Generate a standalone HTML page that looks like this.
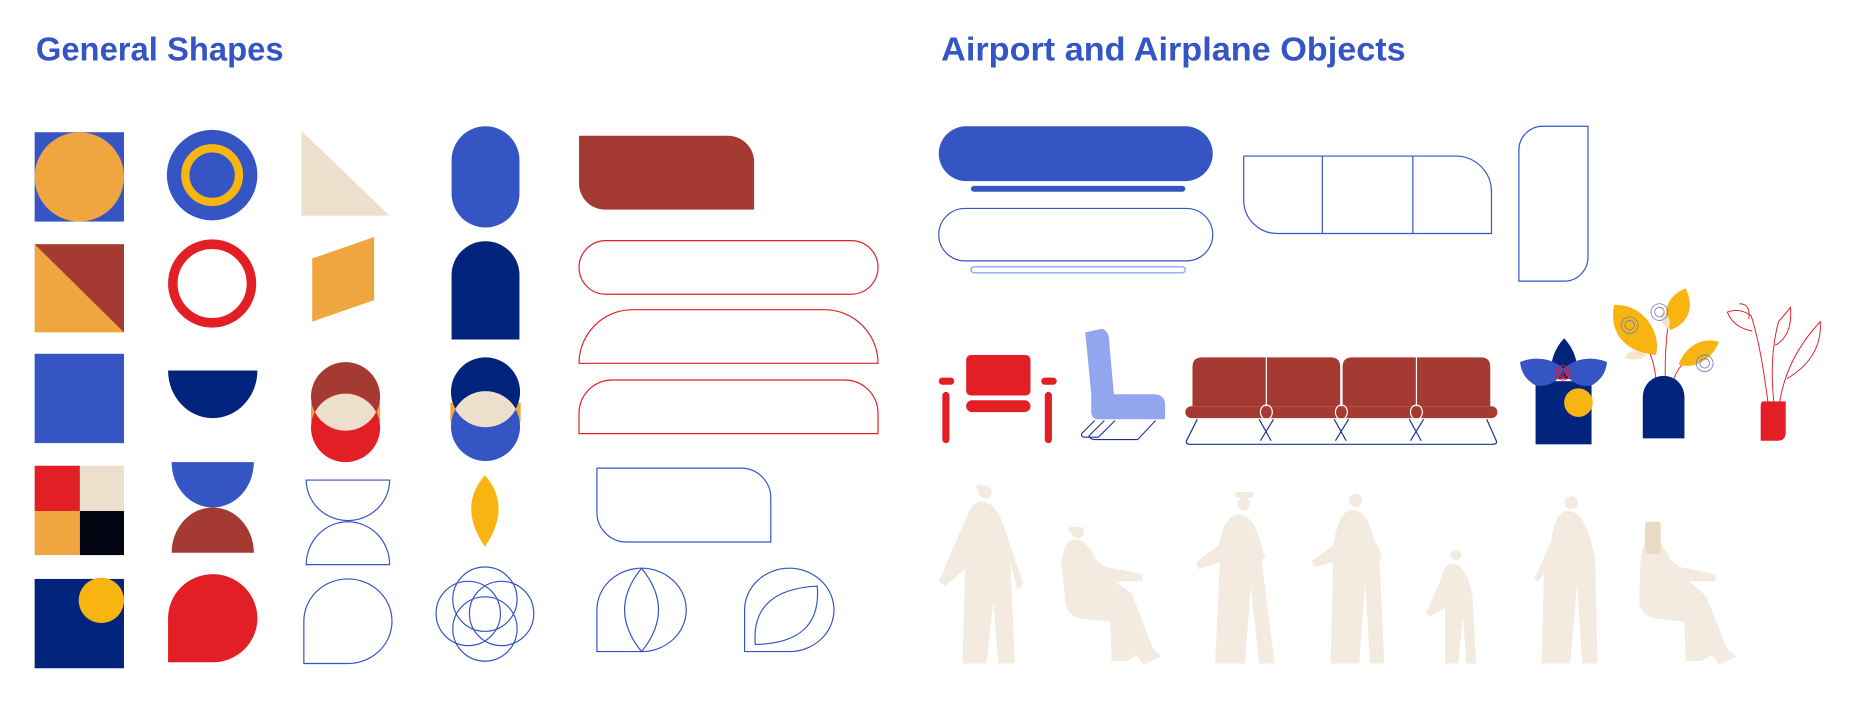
<!DOCTYPE html>
<html><head><meta charset="utf-8"><style>
html,body{margin:0;padding:0;background:#fff;width:1868px;height:704px;overflow:hidden}
svg{display:block}
text{font-family:"Liberation Sans",sans-serif;font-weight:bold;fill:#3555c5}
</style></head><body>
<svg width="1868" height="704" viewBox="0 0 1568 591" xmlns="http://www.w3.org/2000/svg">
<text x="30" y="51" font-size="28" textLength="208" lengthAdjust="spacingAndGlyphs">General Shapes</text>
<text x="790" y="51" font-size="28" textLength="390" lengthAdjust="spacingAndGlyphs">Airport and Airplane Objects</text>

<!-- column 1 -->
<rect x="29" y="111" width="75" height="75" fill="#3555c5"/>
<ellipse cx="66.5" cy="148.5" rx="37.5" ry="37.5" fill="#efa540"/>
<rect x="29" y="205" width="75" height="74" fill="#efa540"/>
<polygon points="29,205 104,205 104,279" fill="#a53a32"/>
<rect x="29" y="297" width="75" height="75" fill="#3555c5"/>
<rect x="29" y="391" width="38" height="38" fill="#e31f26"/>
<rect x="67" y="391" width="37" height="38" fill="#ecdfcc"/>
<rect x="29" y="429" width="38" height="37" fill="#efa540"/>
<rect x="67" y="429" width="37" height="37" fill="#020412"/>
<rect x="29" y="486" width="75" height="75" fill="#02247c"/>
<ellipse cx="85" cy="504" rx="19" ry="19" fill="#f8b512"/>

<!-- column 2 -->
<circle cx="178" cy="147" r="38" fill="#3555c5"/>
<circle cx="178" cy="147" r="22.5" fill="none" stroke="#f8b512" stroke-width="7"/>
<circle cx="178" cy="238" r="33" fill="none" stroke="#e31f26" stroke-width="8"/>
<path d="M141,311 H216 A37.5,40 0 0 1 141,311Z" fill="#02247c"/>
<path d="M144,388 H213 A34.5,38 0 0 1 144,388Z" fill="#3555c5"/>
<path d="M144,464 H213 V464 A34.5,38 0 0 0 144,464Z" fill="#a53a32"/>
<path d="M141,556 V519 A37.5,37 0 1 1 178,556 Z" fill="#e31f26"/>

<!-- column 3 -->
<polygon points="253,110 253,181 327,181" fill="#ecdfcc"/>
<polygon points="262,217 314,199 314,252 262,270" fill="#efa540"/>
<rect x="261" y="338" width="58" height="16" fill="#efa540"/>
<circle cx="290" cy="333" r="29" fill="#a53a32"/>
<circle cx="290" cy="359" r="29" fill="#e31f26"/>
<path d="M264.3,346 A29,29 0 0 1 315.7,346 A29,29 0 0 1 264.3,346Z" fill="#ecdfcc"/>
<path d="M257,403 H327 A35,34 0 0 1 257,403Z" fill="none" stroke="#3555c5" stroke-width="1"/>
<path d="M257,474 H327 A35,36 0 0 0 257,474Z" fill="none" stroke="#3555c5" stroke-width="1"/>
<path d="M255,557 V521 A37,35.5 0 1 1 292,557 Z" fill="none" stroke="#3555c5" stroke-width="1"/>

<!-- column 4 -->
<rect x="379" y="106" width="57" height="85" rx="28.5" fill="#3555c5"/>
<path d="M379,285 V231 A28.5,28.5 0 0 1 436,231 V285Z" fill="#02247c"/>
<rect x="378" y="338" width="59" height="16" fill="#efa540"/>
<circle cx="407.5" cy="329" r="29" fill="#02247c"/>
<circle cx="407.5" cy="358" r="29" fill="#3555c5"/>
<path d="M382,343.5 A29,29 0 0 1 433,343.5 A29,29 0 0 1 382,343.5Z" fill="#ecdfcc"/>
<path d="M407,399 Q430,425 407,459 Q384,425 407,399Z" fill="#f8b512"/>
<g fill="none" stroke="#3555c5" stroke-width="1">
<circle cx="407" cy="503" r="27"/><circle cx="407" cy="528" r="27"/>
<circle cx="393" cy="515" r="27"/><circle cx="421" cy="515" r="27"/>
</g>

<!-- column 5 -->
<path d="M486,114 H611 A22,22 0 0 1 633,136 V176 H508 A22,22 0 0 1 486,154Z" fill="#a53a32"/>
<rect x="486" y="202" width="251" height="45" rx="22.5" fill="none" stroke="#e31f26" stroke-width="1"/>
<path d="M486,305 A45,45 0 0 1 531,260 H692 A45,45 0 0 1 737,305Z" fill="none" stroke="#e31f26" stroke-width="1"/>
<path d="M486,364 V347 A28,28 0 0 1 514,319 H709 A28,28 0 0 1 737,347 V364Z" fill="none" stroke="#e31f26" stroke-width="1"/>
<path d="M501,393 H622 A25,25 0 0 1 647,418 V455 H526 A25,25 0 0 1 501,430Z" fill="none" stroke="#3555c5" stroke-width="1"/>
<g fill="none" stroke="#3555c5" stroke-width="1">
<path d="M501,547 V512 A37.5,35 0 1 1 538.5,547 Z"/>
<path d="M538.5,477 Q510,512 538.5,547 Q567,512 538.5,477Z"/>
<path d="M625,547 V512 A37.5,35 0 1 1 662.5,547 Z"/>
<path d="M634,541 Q630,495 686,492 Q690,540 634,541Z"/>
</g>

<!-- airport row 1 -->
<rect x="788" y="106" width="230" height="46" rx="23" fill="#3555c5"/>
<rect x="815" y="156" width="180" height="5" rx="2.5" fill="#3555c5"/>
<rect x="788" y="175" width="230" height="44" rx="22" fill="none" stroke="#3555c5" stroke-width="1"/>
<rect x="815" y="224" width="180" height="5" rx="2.5" fill="none" stroke="#91a6ee" stroke-width="1.2"/>
<path d="M1044,131 H1222 A30,30 0 0 1 1252,161 V196 H1072 A28,28 0 0 1 1044,168Z" fill="none" stroke="#3555c5" stroke-width="1"/>
<line x1="1110" y1="131" x2="1110" y2="196" stroke="#3555c5" stroke-width="1"/>
<line x1="1186" y1="131" x2="1186" y2="196" stroke="#3555c5" stroke-width="1"/>
<path d="M1295,106 H1333 V216 A20,20 0 0 1 1313,236 H1275 V126 A20,20 0 0 1 1295,106Z" fill="none" stroke="#3555c5" stroke-width="1"/>

<!-- red chair -->
<g fill="#e31f26">
<rect x="788" y="317" width="13" height="6" rx="3"/>
<rect x="791" y="329" width="6" height="43" rx="3"/>
<rect x="874" y="317" width="13" height="6" rx="3"/>
<rect x="877" y="329" width="6" height="43" rx="3"/>
<rect x="811" y="298" width="54" height="34" rx="4"/>
<rect x="811" y="336" width="54" height="10" rx="5"/>
</g>
<!-- plane seat -->
<path d="M911,279 L925,276 Q931,278 931,286 L935,331 H968 Q978,331 978,340 V352 H922 Q916,352 916,345 V331 Z" fill="#91a6ee"/>
<g fill="none" stroke="#1b338f" stroke-width="0.9">
<path d="M919,353 L908,364 Q907,367 911,367 L922,367 L936,353"/>
<path d="M927,353 L914,366 Q915,369 919,369 L955,369 L970,353"/>
</g>
<!-- bench -->
<g fill="#a53a32">
<path d="M1001,341 V308 Q1001,300 1009,300 H1117 Q1125,300 1125,308 V341Z"/>
<path d="M1127,341 V308 Q1127,300 1135,300 H1243 Q1251,300 1251,308 V341Z"/>
<rect x="995" y="341" width="262" height="10" rx="5"/>
</g>
<g stroke="#fff" stroke-width="1" fill="none">
<line x1="1063" y1="300" x2="1063" y2="341"/><line x1="1189" y1="300" x2="1189" y2="341"/>
<line x1="1126" y1="300" x2="1126" y2="341"/>
<ellipse cx="1063" cy="346" rx="5" ry="6"/><ellipse cx="1126" cy="346" rx="5" ry="6"/><ellipse cx="1189" cy="346" rx="5" ry="6"/>
</g>
<g fill="none" stroke="#1b338f" stroke-width="1">
<path d="M1005,352 L996,370 Q995,373 999,373 H1253 Q1257,373 1256,370 L1248,352"/>
<path d="M1057,352 L1067,370 M1069,352 L1058,370 M1120,352 L1130,370 M1132,352 L1121,370 M1183,352 L1193,370 M1195,352 L1184,370"/>
</g>
<!-- pedestal plant -->
<rect x="1289" y="320" width="47" height="53" fill="#02247c"/>
<path d="M1313,284 Q1326,298 1324,318 H1302 Q1300,298 1313,284Z" fill="#02247c"/>
<path d="M1276,304 C1290,298 1305,302 1313,310 C1308,322 1296,326 1288,323 C1280,318 1277,312 1276,304Z" fill="#3555c5"/>
<path d="M1349,304 C1335,298 1320,302 1312,310 C1317,322 1329,326 1337,323 C1345,318 1348,312 1349,304Z" fill="#3555c5"/>
<circle cx="1325" cy="338" r="12" fill="#f8b512"/>
<g fill="none" stroke="#e31f26" stroke-width="0.8"><circle cx="1312" cy="313" r="6"/><circle cx="1312" cy="313" r="3.5"/><circle cx="1309" cy="315" r="3"/><circle cx="1315" cy="315" r="3"/></g>
<!-- vase plant -->
<g fill="none" stroke="#e31f26" stroke-width="0.8">
<path d="M1373,275 Q1388,295 1390,318"/><path d="M1398,320 Q1397,290 1402,262"/><path d="M1405,318 Q1412,300 1428,297"/>
</g>
<path d="M1355,256 C1380,255 1395,280 1390,298 C1365,296 1350,280 1355,256Z" fill="#f8b512"/>
<path d="M1415,242 C1423,258 1417,272 1402,277 C1394,262 1400,248 1415,242Z" fill="#f8b512"/>
<path d="M1443,287 C1436,304 1420,310 1409,306 C1414,292 1428,282 1443,287Z" fill="#f8b512"/>
<path d="M1382,298 C1375,293 1366,294 1364,300 C1370,303 1378,302 1382,298Z" fill="#f3e4d0"/>
<path d="M1400,276 C1394,272 1392,265 1396,262 C1402,266 1403,272 1400,276Z" fill="#f3e4d0"/>
<g fill="none" stroke="#6a7cc8" stroke-width="0.7">
<circle cx="1368" cy="273" r="7"/><circle cx="1368" cy="273" r="4"/>
<circle cx="1393" cy="262" r="7"/><circle cx="1393" cy="262" r="4"/>
<circle cx="1431" cy="305" r="7"/><circle cx="1431" cy="305" r="4"/>
</g>
<path d="M1379,368 V333 A17.5,17.5 0 0 1 1414,333 V368Z" fill="#02247c"/>
<!-- red vase -->
<g fill="none" stroke="#e31f26" stroke-width="0.8">
<path d="M1484,337 Q1478,290 1470,265 Q1460,258 1450,262 Q1455,275 1471,278"/>
<path d="M1468,268 Q1470,255 1460,255"/>
<path d="M1489,337 Q1485,300 1493,270 Q1500,262 1503,258 Q1505,282 1490,290"/>
<path d="M1494,337 Q1500,300 1528,270 Q1530,300 1500,318"/>
</g>
<path d="M1480,337 H1499 V363 Q1499,370 1492,370 H1478 V341 Q1478,337 1480,337Z" fill="#e31f26"/>

<!-- people -->
<g fill="#f3ebe0">
<circle cx="827" cy="413" r="5.5"/><circle cx="822" cy="409" r="2.5"/>
<path d="M822,421 Q835,420 842,440 L859,490 L854,495 L848,472 L852,557 L838,557 L834,505 L828,557 L808,557 L810,478 L793,492 L788,488 L808,442 Q815,422 822,421Z"/>
<circle cx="905" cy="447" r="5"/><circle cx="900" cy="445" r="3"/>
<path d="M902,453 Q912,452 920,470 L928,476 L959,482 L959,488 L936,488 L950,498 L968,545 L975,551 L960,558 L954,550 L946,555 L933,555 L932,522 L906,519 Q894,516 894,502 L891,473 Q893,453 902,453Z"/>
<circle cx="1044" cy="423" r="5.5"/><rect x="1037" y="413" width="15" height="5" rx="1"/>
<path d="M1038,432 Q1052,431 1058,455 L1062,468 L1059,470 L1070,557 L1057,557 L1050,492 L1045,557 L1020,557 L1024,472 L1006,478 L1004,472 L1023,458 Q1028,433 1038,432Z"/>
<circle cx="1138" cy="420" r="5.5"/>
<path d="M1134,428 Q1148,428 1153,452 L1160,466 L1158,470 L1162,557 L1150,557 L1146,490 L1141,557 L1117,557 L1119,472 L1103,476 L1101,471 L1119,458 Q1124,429 1134,428Z"/>
<circle cx="1222" cy="466" r="4.5"/>
<path d="M1218,473 Q1228,473 1233,488 L1236,500 L1239,557 L1231,557 L1228,518 L1224,557 L1213,557 L1213,510 L1200,518 L1197,515 L1210,485 Q1212,474 1218,473Z"/>
<circle cx="1319" cy="422" r="5.5"/>
<path d="M1315,429 Q1330,428 1337,460 L1339,470 L1341,557 L1328,557 L1324,490 L1318,557 L1294,557 L1296,482 L1291,488 L1288,486 L1302,455 Q1305,430 1315,429Z"/>
<circle cx="1388" cy="446" r="5"/>
<path d="M1385,453 Q1395,452 1402,470 L1410,476 L1440,482 L1440,488 L1418,488 L1432,500 L1450,545 L1458,551 L1443,558 L1437,550 L1428,555 L1415,555 L1414,522 L1388,519 Q1376,516 1376,502 L1377,473 Q1378,454 1385,453Z"/>
</g>
<rect x="1381" y="438" width="13" height="27" rx="2" fill="#ead9c4"/>
</svg>
</body></html>
